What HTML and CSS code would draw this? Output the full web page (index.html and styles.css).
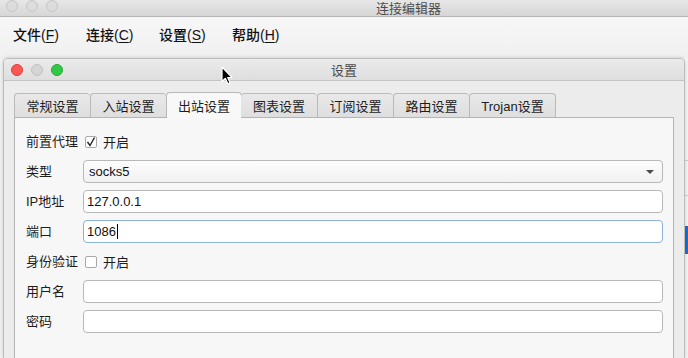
FILE: index.html
```html
<!DOCTYPE html>
<html lang="zh-CN">
<head>
  <meta charset="UTF-8" />
  <title>连接编辑器</title>
  <link rel="stylesheet" href="styles.css">
</head>
<body>

  <div class="app">
    <div class="main-titlebar">
      <div class="lights">
        <span class="light"></span>
        <span class="light"></span>
        <span class="light"></span>
      </div>
      <div class="main-title">连接编辑器</div>
    </div>

    <div class="menubar">
      <span class="menu-item">文件(<u>F</u>)</span>
      <span class="menu-item">连接(<u>C</u>)</span>
      <span class="menu-item">设置(<u>S</u>)</span>
      <span class="menu-item">帮助(<u>H</u>)</span>
    </div>

    <div class="main-body">
      <div class="peek">
        <div class="peek-line first"></div>
        <div class="peek-line"></div>
        <div class="peek-selected"></div>
      </div>
    </div>
  </div>

  <div class="dialog">
    <div class="dialog-titlebar">
      <div class="lights">
        <span class="light red"></span>
        <span class="light grey"></span>
        <span class="light green"></span>
      </div>
      <div class="dialog-title">设置</div>
    </div>

    <div class="dialog-body">
      <div class="tabs">
        <div class="tab">常规设置</div>
        <div class="tab">入站设置</div>
        <div class="tab active">出站设置</div>
        <div class="tab">图表设置</div>
        <div class="tab">订阅设置</div>
        <div class="tab">路由设置</div>
        <div class="tab wide">Trojan设置</div>
      </div>

      <div class="pane">
        <div class="form">
          <label class="label">前置代理</label>
          <div class="check-row">
            <span class="checkbox">
              <svg width="10" height="10" viewBox="0 0 10 10"><polyline points="1.5,5 4,8.5 8.5,0.5" fill="none" stroke="#222" stroke-width="1.4"/></svg>
            </span>
            <span>开启</span>
          </div>

          <label class="label">类型</label>
          <div class="combo">
            <span>socks5</span>
            <span class="arrow"></span>
          </div>

          <label class="label">IP地址</label>
          <div class="field">127.0.0.1</div>

          <label class="label">端口</label>
          <div class="field focused">1086<span class="caret"></span></div>

          <label class="label">身份验证</label>
          <div class="check-row">
            <span class="checkbox"></span>
            <span>开启</span>
          </div>

          <label class="label">用户名</label>
          <div class="field"></div>

          <label class="label">密码</label>
          <div class="field"></div>
        </div>
      </div>
    </div>
  </div>

  <svg class="cursor" width="12" height="19" viewBox="0 0 12 19">
    <path d="M1 1 L1 15.5 L4.4 12.3 L6.8 17.8 L9 16.8 L6.7 11.5 L11 11.5 Z" fill="#000" stroke="#fff" stroke-width="1.2" stroke-linejoin="round"/>
  </svg>

</body>
</html>
```

FILE: styles.css
```css
body {
  margin: 0;
  width: 688px;
  height: 358px;
  overflow: hidden;
  position: relative;
  background: #ececec;
  color: #1d1d1d;
  font-family: 'Liberation Sans', 'Noto Sans CJK SC', sans-serif;
  font-size: 13px;
}

.app {
  display: flex;
  flex-direction: column;
  height: 363px;
  margin-top: -5px;
}

/* background window */
.main-titlebar {
  height: 21px;
  display: flex;
  align-items: center;
  background: linear-gradient(#ececec, #d6d6d6);
  border-bottom: 1px solid #b4b4b4;
}

.lights {
  display: flex;
  gap: 8px;
  padding-left: 6px;
}

.light {
  width: 12px;
  height: 12px;
  border-radius: 50%;
  box-sizing: border-box;
  background: #dcdcdc;
  border: 1px solid #c6c6c6;
}

.main-title {
  margin-left: 318px;
  margin-top: 3px;
  color: #4d4d4d;
}

.menubar {
  height: 41px;
  display: flex;
  align-items: center;
  padding-left: 13px;
  padding-bottom: 7px;
  box-sizing: border-box;
  background: linear-gradient(#f7f7f7, #f0f0f0);
  font-size: 14px;
  font-weight: 500;
  color: #111;
}

.menu-item {
  flex: 0 0 73px;
}

.menu-item u {
  text-decoration-thickness: 1px;
  text-underline-offset: 2px;
}

.main-body {
  flex: 1;
  display: flex;
  justify-content: flex-end;
  background: #f4f4f4;
}

.peek {
  width: 3px;
  background: #f6f6f6;
}

.peek-line {
  height: 1px;
  background: #cfcfcf;
  margin-top: 34px;
}

.peek-line.first {
  margin-top: 102px;
}

.peek-selected {
  height: 28px;
  margin-top: 30px;
  background: #1b6fd3;
}

/* settings dialog */
.dialog {
  position: absolute;
  left: 3px;
  top: 58px;
  width: 682px;
  height: 300px;
  box-sizing: border-box;
  border: 1px solid #bdbdbd;
  border-bottom: none;
  border-radius: 5px 5px 0 0;
  background: #ececec;
  box-shadow: 0 0 4px rgba(0, 0, 0, 0.18);
  overflow: hidden;
}

.dialog-titlebar {
  height: 21px;
  display: flex;
  align-items: center;
  position: relative;
  background: linear-gradient(#ebebeb, #dedede);
  border-bottom: 1px solid #c4c4c4;
}

.dialog-titlebar .lights {
  padding-left: 7px;
}

.light.red {
  background: #fc5753;
  border-color: #df3d39;
}

.light.grey {
  background: #d5d5d5;
  border-color: #c2c2c2;
}

.light.green {
  background: #33c748;
  border-color: #27aa35;
}

.dialog-title {
  position: absolute;
  left: 0;
  right: 0;
  text-align: center;
  color: #4a4a4a;
}

.dialog-body {
  padding: 12px 10px 0 10px;
}

.tabs {
  display: flex;
  align-items: flex-end;
  height: 24px;
  position: relative;
  z-index: 1;
}

.tab {
  width: 76px;
  height: 24px;
  box-sizing: border-box;
  display: flex;
  align-items: center;
  justify-content: center;
  background: linear-gradient(#e9e9e9, #dedede);
  border: 1px solid #b9b9b9;
  border-right: none;
  border-bottom: none;
  border-radius: 4px 4px 0 0;
  color: #1d1d1d;
}

.tab.wide {
  width: 87px;
  border-right: 1px solid #b9b9b9;
}

.tab.active {
  height: 26px;
  background: #f8f8f8;
  border-right: 1px solid #b9b9b9;
  margin-right: -1px;
  margin-bottom: -1px;
  padding-bottom: 1px;
}

.tab.active + .tab {
  border-left: none;
}

.pane {
  height: 240px;
  background: #f7f7f7;
  border: 1px solid #b4b4b4;
  padding: 12px 10px 0 11px;
}

.form {
  display: grid;
  grid-template-columns: 52px 1fr;
  column-gap: 5px;
  row-gap: 7px;
  grid-auto-rows: 23px;
  align-items: center;
}

.label {
  line-height: 23px;
  white-space: nowrap;
}

.check-row {
  display: flex;
  align-items: center;
  gap: 6px;
  padding-left: 2px;
}

.checkbox {
  width: 12px;
  height: 12px;
  box-sizing: border-box;
  border: 1px solid #a9a9a9;
  border-radius: 2px;
  background: #fff;
  display: flex;
  align-items: center;
  justify-content: center;
}

.combo,
.field {
  height: 23px;
  box-sizing: border-box;
  border: 1px solid #b8b8b8;
  border-radius: 4px;
  background: #fff;
  display: flex;
  align-items: center;
  padding: 0 3px;
  color: #111;
}

.combo {
  background: linear-gradient(#fdfdfd, #f1f1f1);
  padding: 0 8px 0 5px;
  justify-content: space-between;
}

.arrow {
  width: 0;
  height: 0;
  border-left: 4px solid transparent;
  border-right: 4px solid transparent;
  border-top: 4px solid #4a4a4a;
}

.field.focused {
  border-color: #8eb1da;
}

.caret {
  display: inline-block;
  width: 1px;
  height: 15px;
  background: #000;
  margin-left: 1px;
}

.cursor {
  position: absolute;
  left: 221px;
  top: 66px;
}
```
